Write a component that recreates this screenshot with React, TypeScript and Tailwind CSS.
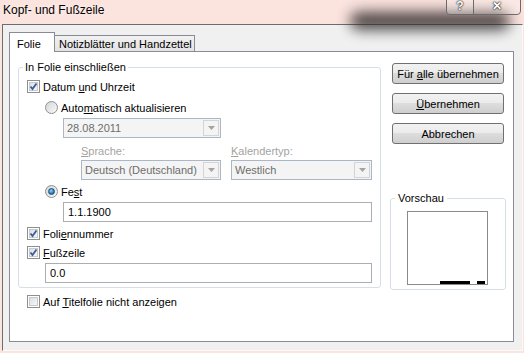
import React from 'react';

const font = "font-['Liberation_Sans',Arial,sans-serif]";

function CheckBox({ checked }: { checked?: boolean }) {
  return (
    <span className="relative flex h-[13px] w-[13px] shrink-0 items-center justify-center border border-[#8e8f8f] bg-white">
      <span className="h-[9px] w-[9px] border border-[#c5c9d0] bg-gradient-to-br from-[#dcdfe4] to-[#f7f7f7]" />
      {checked && (
        <svg viewBox="0 0 13 13" className="absolute left-[-1px] top-[-1px] h-[13px] w-[13px]">
          <path d="M3.5 6.5 L5.5 9 L9.5 3.5" fill="none" stroke="#3d5a98" strokeWidth="1.8" />
        </svg>
      )}
    </span>
  );
}

function Radio({ checked }: { checked?: boolean }) {
  return (
    <span className="flex h-[13px] w-[13px] shrink-0 items-center justify-center rounded-full border border-[#8e8f8f] bg-gradient-to-br from-[#d4d6d9] to-[#f9f9f9]">
      {checked && (
        <span className="h-[7px] w-[7px] rounded-full border border-[#1c4f77] bg-[radial-gradient(circle_at_40%_35%,#8fd6ff,#2a7bb8_60%,#104a78)]" />
      )}
    </span>
  );
}

function Combo({ value, className }: { value: string; className: string }) {
  return (
    <div className={`flex h-[20px] items-stretch border border-[#a9b7c9] bg-[#f4f4f4] ${className}`}>
      <span className="flex flex-1 items-center whitespace-nowrap pl-[3px] text-[#6d6d6d]">{value}</span>
      <span className="m-[1px] flex w-[16px] items-center justify-center border border-[#d4d4d4] bg-[#f4f4f4]">
        <svg viewBox="0 0 7 4" className="h-[4px] w-[7px]">
          <path d="M0 0 H7 L3.5 4 Z" fill="#a3a3a3" />
        </svg>
      </span>
    </div>
  );
}

function TextBox({ value, className }: { value: string; className: string }) {
  return (
    <div className={`flex h-[20px] items-center border border-[#abadb3] bg-white pl-[4px] text-black ${className}`}>
      {value}
    </div>
  );
}

function Button({ children }: { children: React.ReactNode }) {
  return (
    <div className="flex h-[21px] w-[112px] items-center justify-center whitespace-nowrap rounded-[3px] border border-[#707070] bg-[linear-gradient(#f2f2f2_0%,#ebebeb_49%,#dddddd_50%,#cfcfcf_100%)] text-black">
      <span>{children}</span>
    </div>
  );
}

export default function App() {
  return (
    <div className={`relative flex h-[353px] w-[524px] flex-col overflow-hidden whitespace-nowrap bg-[#fbe3de] text-[11px] leading-[14px] ${font}`}>
      <div className="relative h-[24px]">
        <div className="absolute left-[350px] top-[12px] h-[18px] w-[160px] rounded-full bg-[#2e2a2a] opacity-85 blur-[7px]" />
        <span className="absolute left-[3px] top-[3px] text-[12px] text-black [text-shadow:0_0_6px_#fff]">Kopf- und Fußzeile</span>
        <div className="absolute right-[3px] top-[-1px] flex h-[16px] overflow-hidden rounded-b-[4px] border border-[#6f6a6a]">
          <div className="flex w-[27px] items-end justify-center border-r border-[#6f6a6a] bg-[#ffffff40] pb-[2px] text-[12px] font-bold leading-[12px] text-white [text-shadow:0_0_1px_#000,0_0_2px_#000]">?</div>
          <div className="flex w-[46px] items-end justify-center bg-[#ffffff30] pb-[2px] text-[12px] font-bold leading-[12px] text-white [text-shadow:0_0_1px_#000,0_0_2px_#000]">✕</div>
        </div>
      </div>

      <div className="ml-[2px] h-[327px] w-[521px] border border-[#6d6d6d] border-b-[#fafafa] border-r-[#fafafa] bg-[#f0f0f0] pl-[6px] pt-[7px]">
        <div className="flex h-[19px] items-end">
          <div className="relative z-10 -mb-px flex h-[20px] w-[46px] items-start border border-b-0 border-[#898c95] bg-white pl-[7px] pt-[4px] text-black">
            Folie
          </div>
          <div className="flex h-[16px] w-[140px] items-center border border-b-0 border-l-0 border-[#898c95] bg-gradient-to-b from-[#f2f2f2] to-[#e3e3e3] pl-[4px] text-black">
            Notizblätter und Handzettel
          </div>
        </div>

        <div className="flex h-[291px] w-[505px] border border-[#898c95] bg-white pl-[8px] pt-[7px]">
          <div className="flex flex-col">
            <fieldset className="w-[363px] rounded-[3px] border border-[#d5dfe5] pb-[4px] text-black">
              <legend className="ml-[4px] px-[2px] leading-[16px]">In Folie einschließen</legend>

              <div className="pl-[8px]">
                <div className="mt-[5px] flex h-[13px] items-center gap-[3px]">
                  <CheckBox checked />
                  <span>Datum <u>u</u>nd Uhrzeit</span>
                </div>

                <div className="ml-[18px] mt-[8px] flex h-[13px] items-center gap-[3px]">
                  <Radio />
                  <span>Auto<u>m</u>atisch aktualisieren</span>
                </div>

                <Combo value="28.08.2011" className="ml-[36px] mt-[4px] w-[158px]" />

                <div className="ml-[54px] mt-[5px] flex h-[15px] items-center text-[#a3a3a3]">
                  <span className="w-[150px]"><u>S</u>prache:</span>
                  <span><u>K</u>alendertyp:</span>
                </div>

                <div className="ml-[54px] mt-[2px] flex gap-[10px]">
                  <Combo value="Deutsch (Deutschland)" className="w-[140px]" />
                  <Combo value="Westlich" className="w-[141px]" />
                </div>

                <div className="ml-[18px] mt-[5px] flex h-[13px] items-center gap-[3px]">
                  <Radio checked />
                  <span>Fe<u>s</u>t</span>
                </div>

                <TextBox value="1.1.1900" className="ml-[36px] mt-[4px] w-[309px]" />

                <div className="mt-[5px] flex h-[13px] items-center gap-[3px]">
                  <CheckBox checked />
                  <span>Foli<u>e</u>nnummer</span>
                </div>

                <div className="mt-[6px] flex h-[13px] items-center gap-[3px]">
                  <CheckBox checked />
                  <span><u>F</u>ußzeile</span>
                </div>

                <TextBox value="0.0" className="ml-[18px] mt-[4px] w-[327px]" />
              </div>
            </fieldset>

            <div className="ml-[9px] mt-[7px] flex h-[13px] items-center gap-[3px] text-black">
              <CheckBox />
              <span>Auf <u>T</u>itelfolie nicht anzeigen</span>
            </div>
          </div>

          <div className="ml-[11px] mt-[4px] flex flex-col">
            <div className="flex flex-col gap-[9px]">
              <Button>Für <u>a</u>lle übernehmen</Button>
              <Button><u>Ü</u>bernehmen</Button>
              <Button>Abbrechen</Button>
            </div>

            <fieldset className="-ml-[2px] mt-[46px] w-[116px] rounded-[3px] border border-[#d5dfe5] pb-[4px]">
              <legend className="ml-[4px] px-[3px] leading-[16px] text-black">Vorschau</legend>
              <div className="ml-[16px] mt-[5px] flex h-[74px] w-[81px] items-end justify-end gap-[7px] border border-[#8a8a8a] bg-white pr-[2px]">
                <span className="h-[3px] w-[30px] bg-black" />
                <span className="h-[3px] w-[8px] bg-black" />
              </div>
            </fieldset>
          </div>
        </div>
      </div>
    </div>
  );
}
